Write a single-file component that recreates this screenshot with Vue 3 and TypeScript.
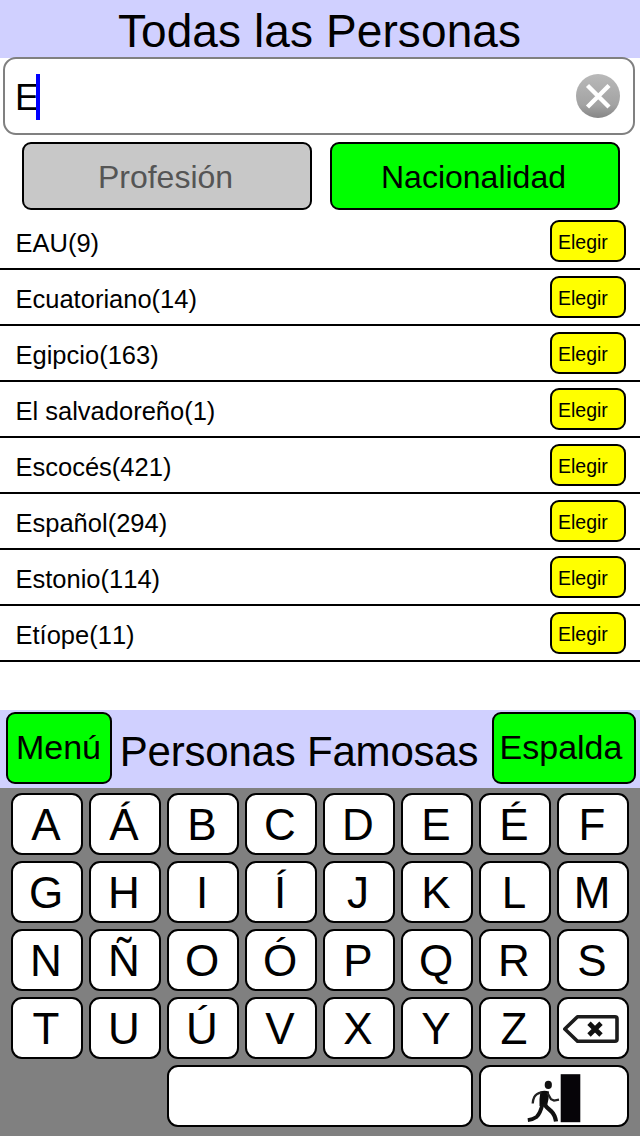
<script setup lang="ts">
import { ref } from 'vue'

interface Nationality {
  name: string
  count: number
}

const query = ref<string>('E')

const nationalities: Nationality[] = [
  { name: 'EAU', count: 9 },
  { name: 'Ecuatoriano', count: 14 },
  { name: 'Egipcio', count: 163 },
  { name: 'El salvadoreño', count: 1 },
  { name: 'Escocés', count: 421 },
  { name: 'Español', count: 294 },
  { name: 'Estonio', count: 114 },
  { name: 'Etíope', count: 11 },
]

const letters: string[] = [...'AÁBCDEÉFGHIÍJKLMNÑOÓPQRSTUÚVXYZ']

const type = (letter: string): void => {
  query.value += letter
}
const erase = (): void => {
  query.value = query.value.slice(0, -1)
}
const clear = (): void => {
  query.value = ''
}
</script>

<template>
  <main class="screen">
    <header class="title-bar"><h1>Todas las Personas</h1></header>

    <div class="search">
      <span class="query">{{ query }}</span>
      <span class="caret"></span>
      <button class="clear" aria-label="Borrar" @click="clear">
        <svg width="44" height="44" viewBox="0 0 44 44">
          <defs>
            <linearGradient id="disc" x1="0" y1="0" x2="0" y2="1">
              <stop offset="0" stop-color="#b9b9b9" />
              <stop offset="0.7" stop-color="#a3a3a3" />
              <stop offset="1" stop-color="#858585" />
            </linearGradient>
          </defs>
          <circle cx="22" cy="22" r="22" fill="url(#disc)" />
          <path d="M11.5 11.5 L33 33 M33 11.5 L11.5 33" stroke="#fff" stroke-width="4.4" />
        </svg>
      </button>
    </div>

    <nav class="tabs">
      <button class="tab off"><span>Profesión</span></button>
      <button class="tab on"><span>Nacionalidad</span></button>
    </nav>

    <ul class="list">
      <li v-for="item in nationalities" :key="item.name" class="row">
        <span class="label">{{ item.name }}({{ item.count }})</span>
        <button class="choose">Elegir</button>
      </li>
    </ul>

    <section class="footer-bar">
      <button class="nav menu">Menú</button>
      <h2>Personas Famosas</h2>
      <button class="nav back">Espalda</button>
    </section>

    <section class="keyboard">
      <button v-for="letter in letters" :key="letter" class="key" @click="type(letter)">{{ letter }}</button>
      <button class="key icon" aria-label="Retroceso" @click="erase">
        <svg width="68" height="58" viewBox="2 2 68 58">
          <path d="M7.8 32 L20.5 19.7 H58 Q60 19.7 60 21.7 V42.3 Q60 44.3 58 44.3 H20.5 Z" fill="none" stroke="#1c1c1c" stroke-width="3.6" stroke-linejoin="round" />
          <path d="M32 26.2 L44 38 M44 26.2 L32 38" stroke="#111" stroke-width="4.8" />
        </svg>
      </button>
      <button class="key space" aria-label="Espacio" @click="type(' ')"></button>
      <button class="key icon exit" aria-label="Salir">
        <svg width="146" height="58" viewBox="2 2 146 58">
          <rect x="81.7" y="9.2" width="19.6" height="48" fill="#060408" />
          <ellipse cx="69.3" cy="19.9" rx="3.6" ry="4.1" fill="#111" />
          <path d="M61.5 26.2 Q66 25 70 26.5 L69.5 34 L68 41 L60.5 41 L60.5 34 Z" fill="#0c0c0c" />
          <path d="M62.5 27.3 Q57 28.5 55.3 32 Q53.8 35 53.7 38.5" fill="none" stroke="#222" stroke-width="2.3" />
          <path d="M68.5 28 L72 34.2 L75 35.6 L80 34.6" fill="none" stroke="#222" stroke-width="2.3" />
          <path d="M63.5 39 Q61.5 48 57.5 52 Q54 54.5 48.8 55.2" fill="none" stroke="#111" stroke-width="3.8" />
          <path d="M65 39 Q68 43 72.5 46.5 Q76 50 77 56.5" fill="none" stroke="#111" stroke-width="4.2" />
        </svg>
      </button>
    </section>
  </main>
</template>

<style>
body {
  margin: 0;
  background: #fff;
}
</style>

<style scoped>
.screen {
  display: flex;
  flex-direction: column;
  width: 640px;
  height: 1136px;
  overflow: hidden;
  background: #fff;
  color: #000;
  font-family: "Liberation Sans", Arial, sans-serif;
}
h1, h2, ul {
  margin: 0;
  padding: 0;
  font-weight: 400;
}
button {
  box-sizing: border-box;
  margin: 0;
  padding: 0;
  border: 2px solid #000;
  color: #000;
  font-family: inherit;
  white-space: nowrap;
}
svg {
  display: block;
}
.title-bar {
  box-sizing: border-box;
  height: 58px;
  padding: 4px 1px 0 0;
  background: #d0d0ff;
  text-align: center;
}
h1 {
  font-size: 46px;
  line-height: 54px;
  letter-spacing: 0.1px;
}
.search {
  box-sizing: border-box;
  display: flex;
  align-items: center;
  width: 632px;
  height: 78px;
  margin: -1px 0 0 3px;
  padding: 0 13px 0 10px;
  border: 2px solid #808080;
  border-radius: 13px;
  background: #fff;
}
.query {
  width: 21px;
  padding-top: 4px;
  font-size: 36px;
  line-height: 40px;
}
.caret {
  width: 4px;
  height: 46px;
  margin-top: 2px;
  background: #00f;
}
.clear {
  margin-left: auto;
  border: 0;
  background: none;
}
.tabs {
  display: flex;
  gap: 18px;
  height: 68px;
  margin: 7px 20px 4px 22px;
}
.tab {
  flex: 1;
  padding: 2px 3px 0 0;
  border-radius: 9px;
  font-size: 32px;
}
.off {
  background: #c8c8c8;
  color: #555;
}
.on {
  background: #0f0;
}
.list {
  list-style: none;
}
.row {
  box-sizing: border-box;
  display: flex;
  align-items: center;
  justify-content: space-between;
  height: 56px;
  padding: 0 14px 0 15px;
  border-bottom: 2px solid #000;
}
.label {
  padding: 4px 0 0 0.5px;
  font-size: 25.5px;
  line-height: 30px;
  font-kerning: none;
}
.choose {
  width: 76px;
  height: 42px;
  padding: 3px 0 0 6px;
  border-radius: 9px;
  background: #ff0;
  font-size: 19.5px;
  text-align: left;
}
.footer-bar {
  box-sizing: border-box;
  display: flex;
  height: 78px;
  margin-top: auto;
  padding: 2px 4px 4px 6px;
  background: #d0d0ff;
}
.nav {
  height: 72px;
  padding-bottom: 1px;
  border-radius: 9px;
  background: #0f0;
  font-size: 34px;
}
.menu {
  width: 106px;
  padding-right: 1px;
}
.back {
  width: 144px;
  padding-right: 6px;
}
h2 {
  flex: 1;
  padding: 4px 6px 0 0;
  font-size: 42px;
  line-height: 71px;
  letter-spacing: -0.2px;
  text-align: center;
  white-space: nowrap;
}
.keyboard {
  box-sizing: border-box;
  display: grid;
  grid-template-columns: repeat(8, 72px);
  grid-auto-rows: 62px;
  gap: 6px;
  height: 348px;
  padding: 5px 11px;
  background: #808080;
}
.key {
  padding: 2px 2px 0 0;
  border-radius: 11px;
  background: #fff;
  font-size: 44px;
  line-height: 50px;
}
.icon {
  padding: 0;
}
.space {
  grid-column: 3 / span 4;
}
.exit {
  grid-column: 7 / span 2;
}
</style>
